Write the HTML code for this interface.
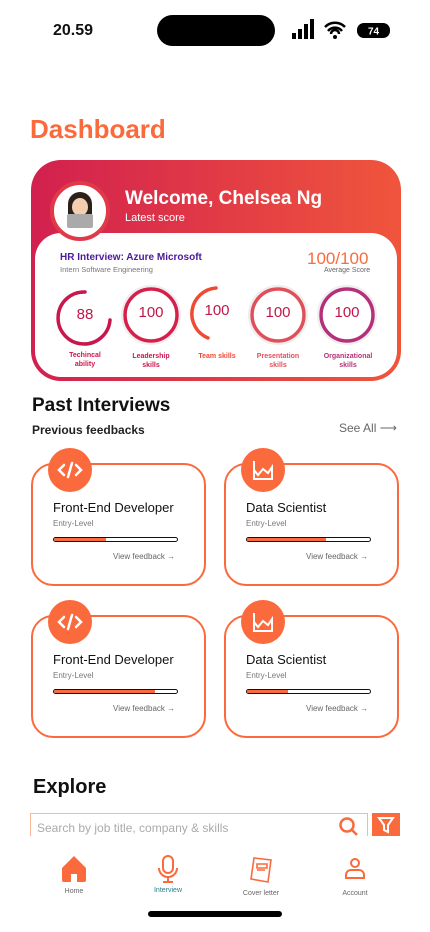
<!DOCTYPE html>
<html><head><meta charset="utf-8"><style>
*{margin:0;padding:0;box-sizing:border-box}
body{width:430px;height:932px;background:#fff;font-family:"Liberation Sans",sans-serif;position:relative;overflow:hidden;color:#111}
.a{position:absolute}
.card{position:absolute;border:2px solid #fb6a3c;border-radius:22px;background:#fff;width:175px;height:123px}
.ic{position:absolute;width:44px;height:44px;border-radius:50%;background:#fb6a3c;left:15px;top:-17px}
.ct{position:absolute;left:20px;top:35px;font-size:13px;color:#111}
.cs{position:absolute;left:20px;top:54px;font-size:8px;color:#777}
.bar{position:absolute;left:20px;top:72px;width:125px;height:5px;border:1px solid #111;border-radius:3px;overflow:hidden}
.bar i{display:block;height:100%;background:#fb6a3c}
.vf{position:absolute;left:80px;top:87px;font-size:8px;color:#666}
.rl{position:absolute;font-size:7px;text-align:center;width:70px;line-height:9px;font-weight:bold}
.rn{position:absolute;font-size:15px;color:#c0174b;width:60px;text-align:center}
.nl{position:absolute;font-size:7px;color:#666;width:70px;text-align:center}
</style></head><body>
<div class="a" style="left:53px;top:22px;font-size:16px;font-weight:bold">20.59</div>
<div class="a" style="left:157px;top:15px;width:118px;height:31px;background:#000;border-radius:16px"></div>
<svg class="a" style="left:292px;top:19px" width="100" height="22">
<rect x="0" y="14" width="4" height="6" fill="#000"/><rect x="6" y="10" width="4" height="10" fill="#000"/><rect x="12" y="5" width="4" height="15" fill="#000"/><rect x="18" y="0" width="4" height="20" fill="#000"/>
<path d="M33 8a14 14 0 0 1 20 0M36 12a9 9 0 0 1 14 0M39 15a4 4 0 0 1 8 0" stroke="#000" stroke-width="2.5" fill="none"/><circle cx="43" cy="18" r="2" fill="#000"/>
<rect x="65" y="4" width="33" height="15" rx="7" fill="#000"/><text x="81.5" y="15.5" font-size="10" font-weight="bold" fill="#fff" text-anchor="middle" font-family="Liberation Sans">74</text>
</svg>
<div class="a" style="left:30px;top:114px;font-size:26px;font-weight:bold;color:#fb6a3c">Dashboard</div>

<div class="a" style="left:31px;top:160px;width:370px;height:221px;border-radius:30px;background:linear-gradient(90deg,#d2204f,#f0553c)"></div>
<div class="a" style="left:35px;top:233px;width:362px;height:144px;border-radius:26px;background:#fff"></div>
<div class="a" style="left:50px;top:181px;width:60px;height:60px;border-radius:50%;background:#fff;border:4px solid #e03a4a"></div>
<svg class="a" style="left:62px;top:190px" width="36" height="40"><path d="M6 30V14a12 12 0 0 1 24 0v16z" fill="#2a211c"/><ellipse cx="18" cy="17" rx="8" ry="9" fill="#f3cfb0"/><rect x="5" y="24" width="26" height="14" rx="2" fill="#aaa"/></svg>
<div class="a" style="left:125px;top:188px;font-size:19px;font-weight:bold;color:#fff">Welcome, Chelsea Ng</div>
<div class="a" style="left:125px;top:212px;font-size:11px;color:#fff">Latest score</div>
<div class="a" style="left:60px;top:252px;font-size:10px;font-weight:bold;color:#4a1a9a">HR Interview: Azure Microsoft</div>
<div class="a" style="left:60px;top:265px;font-size:7.5px;color:#777">Intern Software Engineering</div>
<div class="a" style="left:307px;top:249px;font-size:17px;color:#fb6a3c">100/100</div>
<div class="a" style="left:324px;top:267px;font-size:7px;color:#666">Average Score</div>
<svg class="a" style="left:0;top:280px" width="430" height="80" fill="none" stroke-width="3.5" stroke-linecap="round">
<path d="M110 40A26 26 0 1 1 85 12" stroke="#c8174e"/>
<circle cx="151" cy="35" r="26" stroke="#d5204c"/><circle cx="151" cy="35" r="29" stroke="#eee" stroke-width="2"/>
<path d="M216 8A26 26 0 0 0 208 58" stroke="#f04a32"/>
<circle cx="278" cy="35" r="26" stroke="#e0505a"/><circle cx="278" cy="35" r="29" stroke="#eee" stroke-width="2"/>
<circle cx="347" cy="35" r="26" stroke="#b5307a"/><circle cx="347" cy="35" r="29" stroke="#eee" stroke-width="2"/>
</svg>
<div class="rn" style="left:55px;top:306px">88</div>
<div class="rn" style="left:121px;top:304px">100</div>
<div class="rn" style="left:187px;top:302px">100</div>
<div class="rn" style="left:248px;top:304px">100</div>
<div class="rn" style="left:317px;top:304px">100</div>
<div class="rl" style="left:50px;top:351px;color:#c8174e">Techincal<br>ability</div>
<div class="rl" style="left:116px;top:352px;color:#c8174e">Leadership<br>skills</div>
<div class="rl" style="left:182px;top:352px;color:#f04a32">Team skills</div>
<div class="rl" style="left:243px;top:352px;color:#e0505a">Presentation<br>skills</div>
<div class="rl" style="left:313px;top:352px;color:#b5307a">Organizational<br>skills</div>

<div class="a" style="left:32px;top:395px;font-size:19px;font-weight:bold">Past Interviews</div>
<div class="a" style="left:32px;top:423px;font-size:12px;font-weight:bold;color:#222">Previous feedbacks</div>
<div class="a" style="left:339px;top:421px;font-size:12px;color:#666">See All ⟶</div>

<div class="card" style="left:31px;top:463px"><div class="ic"><svg width="44" height="44" fill="none" stroke="#fff" stroke-width="2.5" stroke-linecap="round"><path d="M16 17l-5 5 5 5M28 17l5 5-5 5M24 15l-4 14"/></svg></div>
<div class="ct">Front-End Developer</div><div class="cs">Entry-Level</div><div class="bar"><i style="width:42%"></i></div><div class="vf">View feedback →</div></div>
<div class="card" style="left:224px;top:463px"><div class="ic"><svg width="44" height="44" fill="none" stroke="#fff" stroke-width="2"><path d="M13 13v18h19M13 22l4 5 5-6 5 4 4-6v12"/></svg></div>
<div class="ct">Data Scientist</div><div class="cs">Entry-Level</div><div class="bar"><i style="width:64%"></i></div><div class="vf">View feedback →</div></div>
<div class="card" style="left:31px;top:615px"><div class="ic"><svg width="44" height="44" fill="none" stroke="#fff" stroke-width="2.5" stroke-linecap="round"><path d="M16 17l-5 5 5 5M28 17l5 5-5 5M24 15l-4 14"/></svg></div>
<div class="ct">Front-End Developer</div><div class="cs">Entry-Level</div><div class="bar"><i style="width:82%"></i></div><div class="vf">View feedback →</div></div>
<div class="card" style="left:224px;top:615px"><div class="ic"><svg width="44" height="44" fill="none" stroke="#fff" stroke-width="2"><path d="M13 13v18h19M13 22l4 5 5-6 5 4 4-6v12"/></svg></div>
<div class="ct">Data Scientist</div><div class="cs">Entry-Level</div><div class="bar"><i style="width:33%"></i></div><div class="vf">View feedback →</div></div>

<div class="a" style="left:33px;top:776px;font-size:20px;font-weight:bold">Explore</div>
<div class="a" style="left:30px;top:813px;width:338px;height:30px;border:1px solid #fbb79c;border-bottom:none"></div>
<div class="a" style="left:37px;top:821px;font-size:12px;color:#aaa">Search by job title, company &amp; skills</div>
<svg class="a" style="left:338px;top:816px" width="22" height="22" fill="none" stroke="#fb6a3c" stroke-width="2.5"><circle cx="9" cy="9" r="6.5"/><path d="M14 14l5 5"/></svg>
<div class="a" style="left:372px;top:813px;width:28px;height:24px;background:#fb6a3c"></div>
<svg class="a" style="left:376px;top:815px" width="20" height="20" fill="none" stroke="#fff" stroke-width="2"><path d="M3 3h14l-5 7v7l-4-2v-5z"/></svg>
<div class="a" style="left:0;top:836px;width:430px;height:96px;background:#fff"></div>
<svg class="a" style="left:60px;top:855px" width="30" height="28"><path d="M2 13L14 1l12 12v12a2 2 0 0 1-2 2h-7v-8h-6v8H4a2 2 0 0 1-2-2z" fill="#fb6a3c"/></svg>
<svg class="a" style="left:157px;top:855px" width="22" height="30" fill="none" stroke="#fb6a3c" stroke-width="2"><rect x="6" y="1" width="10" height="17" rx="5"/><path d="M2 13a9 9 0 0 0 18 0M11 22v5M6 27h10"/></svg>
<svg class="a" style="left:250px;top:856px" width="24" height="28" fill="none" stroke="#fb6a3c" stroke-width="1.6"><path d="M4 2l17 2-3 22-17-3z"/><path d="M7 8h10v4H7zM7 14h8"/></svg>
<svg class="a" style="left:344px;top:857px" width="22" height="24" fill="none" stroke="#fb6a3c" stroke-width="2"><circle cx="11" cy="6" r="4"/><path d="M2 21v-3a5 5 0 0 1 5-5h8a5 5 0 0 1 5 5v3z"/></svg>
<div class="nl" style="left:39px;top:888px">Home</div>
<div class="nl" style="left:133px;top:887px;color:#2a7d8c">Interview</div>
<div class="nl" style="left:226px;top:890px">Cover letter</div>
<div class="nl" style="left:320px;top:890px">Account</div>
<div class="a" style="left:148px;top:911px;width:134px;height:6px;border-radius:3px;background:#000"></div>
</body></html>
